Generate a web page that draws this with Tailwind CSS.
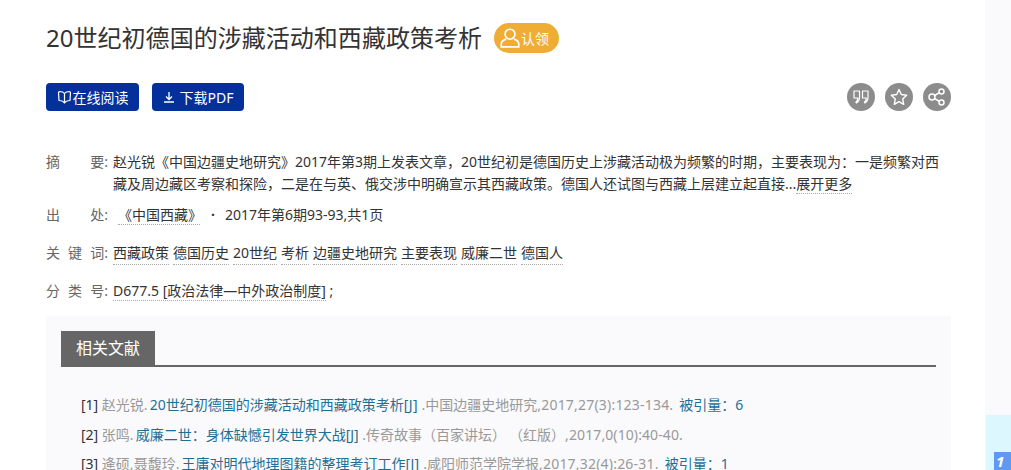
<!DOCTYPE html>
<html lang="zh-CN">
<head>
  <meta charset="UTF-8">
  <meta name="viewport" content="width=device-width, initial-scale=1.0">
  <title>20世纪初德国的涉藏活动和西藏政策考析</title>
  <script src="https://cdn.jsdelivr.net/npm/@tailwindcss/browser@4"></script>
</head>
<body class="h-[470px] overflow-hidden bg-white text-[14px] text-[#333] font-['Noto_Sans','Noto_Sans_CJK_SC',sans-serif]">
  <div class="flex h-[470px] overflow-hidden">
    <main class="w-[985px] shrink-0 pl-[46px] pr-[34px]">
      <!-- title -->
      <div class="flex h-[75px] items-center pt-[1px]">
        <h1 class="text-[24px] leading-[32px] tracking-[0.03px] text-[#333]">20世纪初德国的涉藏活动和西藏政策考析</h1>
        <span class="ml-[12px] flex h-[30px] w-[65px] items-center rounded-full bg-[#f0ad35] pl-[5px] text-[14px] text-white">
          <svg class="h-[22px] w-[22px]" viewBox="0 0 20 20" fill="none" stroke="currentColor" stroke-width="1.500"><circle cx="10" cy="6.500" r="4.500"/><path d="M6.500 11c-3 .8-4.500 2.800-4.500 5v2h16v-2c0-2.200-1.500-4.200-4.500-5"/></svg>
          认领
        </span>
      </div>

      <!-- actions -->
      <div class="mt-[8px] flex h-[28px] items-center">
        <a class="flex h-[28px] w-[93px] items-center justify-center gap-[1px] rounded-[4px] bg-[#03309a] text-white">
          <svg class="h-[15px] w-[15px]" viewBox="0 0 15 15" fill="none" stroke="currentColor" stroke-width="1.200" stroke-linejoin="round"><path d="M7.500 3.500C6.500 2 4.500 1.500 2.500 1.500L1.500 2.500l.5 8c2.500 0 4.500.8 5.500 2.500 1-1.700 3-2.500 5.500-2.500l.5-8-1-1c-2 0-4 .5-5 2zM7.500 3.500V13"/></svg>
          在线阅读
        </a>
        <a class="ml-[13px] flex h-[28px] w-[92px] items-center justify-center gap-[5px] rounded-[4px] bg-[#03309a] text-white">
          <svg class="h-[12px] w-[12px]" viewBox="0 0 12 12" fill="none" stroke="currentColor" stroke-width="1.300"><path d="M6 1v7M3 5.500 6 8.500l3-3M1 11h10"/></svg>
          下载PDF
        </a>
        <div class="ml-auto flex gap-[10px]">
          <span class="flex h-[28px] w-[28px] items-center justify-center rounded-full bg-[#8c8c8c] text-white">
            <svg class="h-[20px] w-[20px]" viewBox="0 0 20 20" fill="none" stroke="currentColor" stroke-width="1.200" stroke-linejoin="round"><path d="M3 4h5.500v6.500c0 2.500-1 4.200-3 5.500l-.6-.7c1.200-1 1.800-2.400 1.900-4.300H3zM11.500 4H17v6.500c0 2.500-1 4.200-3 5.500l-.6-.7c1.200-1 1.800-2.400 1.900-4.300h-3.800z"/></svg>
          </span>
          <span class="flex h-[28px] w-[28px] items-center justify-center rounded-full bg-[#8c8c8c] text-white">
            <svg class="h-[20px] w-[20px]" viewBox="0 0 20 20" fill="none" stroke="currentColor" stroke-width="1.400" stroke-linejoin="round"><path d="M10 2.500l2.300 5 5.400.7-4 3.700 1 5.400L10 14.600l-4.700 2.700 1-5.400-4-3.700 5.400-.7z"/></svg>
          </span>
          <span class="flex h-[28px] w-[28px] items-center justify-center rounded-full bg-[#8c8c8c] text-white">
            <svg class="h-[20px] w-[20px]" viewBox="0 0 20 20" fill="none" stroke="currentColor" stroke-width="1.500"><circle cx="5" cy="10" r="3"/><circle cx="14.500" cy="4.500" r="2.500"/><circle cx="14.500" cy="15.500" r="2.500"/><path d="M7.600 8.500l4.700-2.800M7.600 11.500l4.700 2.800"/></svg>
          </span>
        </div>
      </div>

      <!-- meta -->
      <div class="mt-[40px] leading-[22px]">
        <div class="flex">
          <div class="mr-[5px] flex w-[62px] shrink-0 justify-between text-[#666]"><span>摘</span><span>要:</span></div>
          <p class="w-[838px]">赵光锐《中国边疆史地研究》2017年第3期上发表文章，20世纪初是德国历史上涉藏活动极为频繁的时期，主要表现为：一是频繁对西藏及周边藏区考察和探险，二是在与英、俄交涉中明确宣示其西藏政策。德国人还试图与西藏上层建立起直接...<a class="border-b border-dotted border-[#aaa]">展开更多</a></p>
        </div>
        <div class="mt-[9px] flex">
          <div class="mr-[5px] flex w-[62px] shrink-0 justify-between text-[#666]"><span>出</span><span>处:</span></div>
          <p><a class="ml-[5px] border-b border-dotted border-[#aaa] pr-[5px]">《中国西藏》</a><span class="ml-[11px] mr-[10px] font-bold">·</span>2017年第6期93-93,共1页</p>
        </div>
        <div class="mt-[16px] flex">
          <div class="mr-[5px] flex w-[62px] shrink-0 justify-between text-[#666]"><span>关</span><span>键</span><span>词:</span></div>
          <p class="flex gap-[4px]">
            <a class="border-b border-dotted border-[#aaa]">西藏政策</a>
            <a class="border-b border-dotted border-[#aaa]">德国历史</a>
            <a class="border-b border-dotted border-[#aaa]">20世纪</a>
            <a class="border-b border-dotted border-[#aaa]">考析</a>
            <a class="border-b border-dotted border-[#aaa]">边疆史地研究</a>
            <a class="border-b border-dotted border-[#aaa]">主要表现</a>
            <a class="border-b border-dotted border-[#aaa]">威廉二世</a>
            <a class="border-b border-dotted border-[#aaa]">德国人</a>
          </p>
        </div>
        <div class="mt-[15px] flex">
          <div class="mr-[5px] flex w-[62px] shrink-0 justify-between text-[#666]"><span>分</span><span>类</span><span>号:</span></div>
          <p><a class="border-b border-dotted border-[#aaa]">D677.5 [政治法律—中外政治制度]</a> ;</p>
        </div>
      </div>

      <!-- references -->
      <section class="mt-[14px] h-[154px] overflow-hidden bg-[#fafafc] px-[15px] pt-[15px]">
        <div class="border-b-2 border-[#666]">
          <h2 class="flex h-[34px] w-[94px] items-center justify-center bg-[#666] text-[16px] text-white">相关文献</h2>
        </div>
        <ol class="mt-[23px] pl-[20px] leading-[29.500px] text-[#999]">
          <li class="whitespace-nowrap"><span class="text-[#333]">[1]</span> 赵光锐.<a class="ml-[2px] text-[#1f6f94]">20世纪初德国的涉藏活动和西藏政策考析<span class="tracking-[0.4px]">[J]</span></a> .中国边疆史地研究<span class="tracking-[0.2px]">,2017,27(3):123-134.</span><a class="ml-[6px] text-[#1f6f94]">被引量：6</a></li>
          <li class="whitespace-nowrap"><span class="text-[#333]">[2]</span> 张鸣.<a class="ml-[2px] text-[#1f6f94]">威廉二世：身体缺憾引发世界大战[J]</a> .传奇故事（百家讲坛）<span class="ml-[10px]">（红版）</span><span class="tracking-[0.1px]">,2017,0(10):40-40.</span></li>
          <li class="whitespace-nowrap"><span class="text-[#333]">[3]</span> 逄硕,聂馥玲.<a class="ml-[2px] text-[#1f6f94]">王庸对明代地理图籍的整理考订工作<span class="tracking-[0.4px]">[J]</span></a> .咸阳师范学院学报<span class="tracking-[0.2px]">,2017,32(4):26-31.</span><a class="ml-[6px] text-[#1f6f94]">被引量：1</a></li>
        </ol>
      </section>
    </main>

    <!-- right sidebar strip -->
    <aside class="relative flex-1 bg-[#fafafd]">
      <div class="absolute left-[1px] top-[415px] h-[55px] w-[25px] bg-[#dcf8fe]">
        <div class="absolute left-[8px] top-[37px] h-[18px] w-[17px] bg-[#5f9af0] pl-[2px] text-[15px] leading-[18px] font-bold italic text-white">1</div>
      </div>
    </aside>
  </div>
</body>
</html>
